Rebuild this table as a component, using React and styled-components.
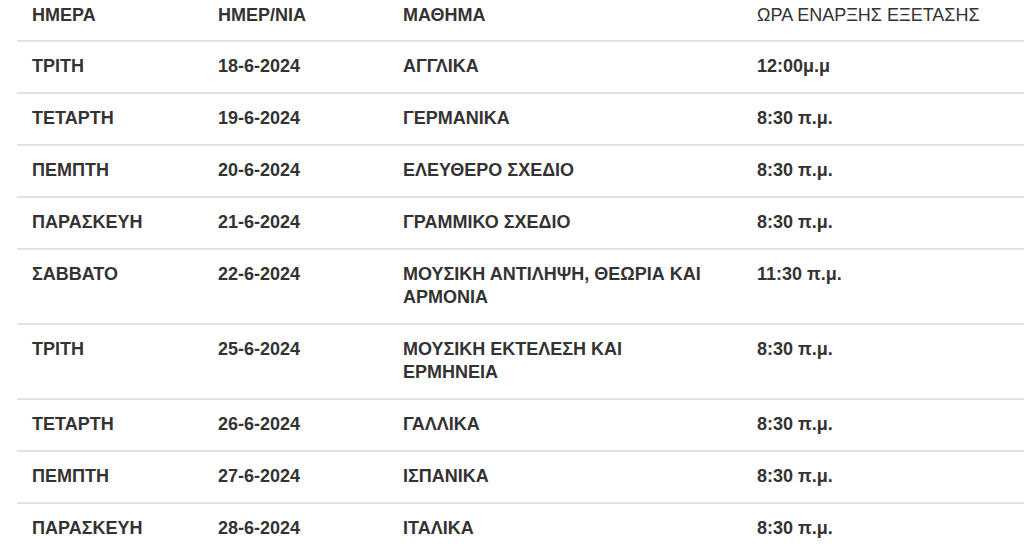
import styled, { createGlobalStyle } from 'styled-components';

const GlobalStyle = createGlobalStyle`
  html, body {
    margin: 0;
    padding: 0;
    background: #fff;
    overflow: hidden;
  }
  body {
    font-family: "Liberation Sans", Arial, sans-serif;
    color: #333;
  }
`;

const Page = styled.div`
  width: 1024px;
  height: 556px;
  overflow: hidden;
  padding-left: 17px;
  box-sizing: border-box;
`;

const Table = styled.div`
  width: 1040px;
  display: flex;
  flex-direction: column;
`;

const Row = styled.div`
  display: grid;
  grid-template-columns: 186px 185px 354px 1fr;
  border-bottom: ${(p) => (p.last ? 'none' : '2px solid #e2e2e2')};
`;

const Cell = styled.div`
  padding: ${(p) => (p.head ? '3px 35px 13px 15px' : '13px 35px 14px 15px')};
  font-size: 18px;
  line-height: ${(p) => (p.head ? '24px' : '23px')};
  font-weight: ${(p) => (p.light ? 400 : 700)};
  color: #333;
`;

const rows = [
  ['ΤΡΙΤΗ', '18-6-2024', 'ΑΓΓΛΙΚΑ', '12:00μ.μ'],
  ['ΤΕΤΑΡΤΗ', '19-6-2024', 'ΓΕΡΜΑΝΙΚΑ', '8:30 π.μ.'],
  ['ΠΕΜΠΤΗ', '20-6-2024', 'ΕΛΕΥΘΕΡΟ ΣΧΕΔΙΟ', '8:30 π.μ.'],
  ['ΠΑΡΑΣΚΕΥΗ', '21-6-2024', 'ΓΡΑΜΜΙΚΟ ΣΧΕΔΙΟ', '8:30 π.μ.'],
  ['ΣΑΒΒΑΤΟ', '22-6-2024', 'ΜΟΥΣΙΚΗ ΑΝΤΙΛΗΨΗ, ΘΕΩΡΙΑ ΚΑΙ ΑΡΜΟΝΙΑ', '11:30 π.μ.'],
  ['ΤΡΙΤΗ', '25-6-2024', 'ΜΟΥΣΙΚΗ ΕΚΤΕΛΕΣΗ ΚΑΙ ΕΡΜΗΝΕΙΑ', '8:30 π.μ.'],
  ['ΤΕΤΑΡΤΗ', '26-6-2024', 'ΓΑΛΛΙΚΑ', '8:30 π.μ.'],
  ['ΠΕΜΠΤΗ', '27-6-2024', 'ΙΣΠΑΝΙΚΑ', '8:30 π.μ.'],
  ['ΠΑΡΑΣΚΕΥΗ', '28-6-2024', 'ΙΤΑΛΙΚΑ', '8:30 π.μ.'],
];

const App = () => {
  return (
    <>
      <GlobalStyle />
      <Page>
        <Table>
          <Row>
            <Cell head>ΗΜΕΡΑ</Cell>
            <Cell head>ΗΜΕΡ/ΝΙΑ</Cell>
            <Cell head>ΜΑΘΗΜΑ</Cell>
            <Cell head light>ΩΡΑ ΕΝΑΡΞΗΣ ΕΞΕΤΑΣΗΣ</Cell>
          </Row>
          {rows.map((r, i) => (
            <Row key={i} last={i === rows.length - 1}>
              {r.map((c, j) => (
                <Cell key={j}>{c}</Cell>
              ))}
            </Row>
          ))}
        </Table>
      </Page>
    </>
  );
};

export default App;
